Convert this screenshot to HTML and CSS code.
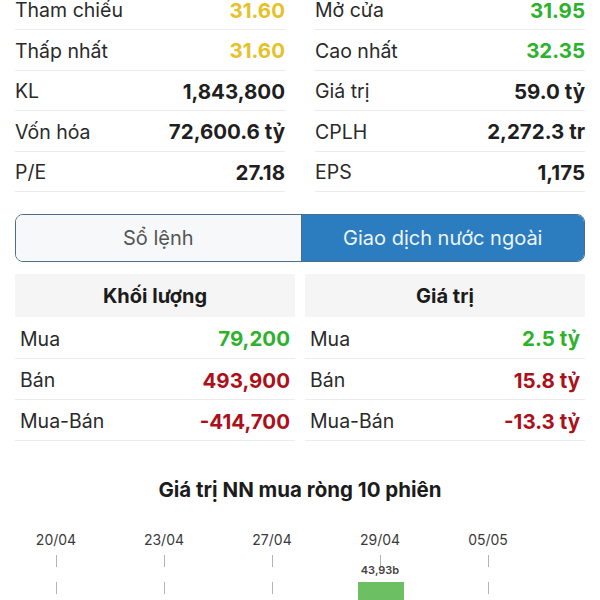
FILE: index.html
```html
<!DOCTYPE html>
<html lang="vi">
<head>
<meta charset="utf-8">
<title>Giao dịch</title>
<link rel="stylesheet" href="styles.css">
</head>
<body>
<div class="stats">
  <div class="cell"><span class="label">Tham chiếu</span><span class="val yellow">31.60</span></div>
  <div class="cell"><span class="label">Mở cửa</span><span class="val green">31.95</span></div>
  <div class="cell"><span class="label">Thấp nhất</span><span class="val yellow">31.60</span></div>
  <div class="cell"><span class="label">Cao nhất</span><span class="val green">32.35</span></div>
  <div class="cell"><span class="label">KL</span><span class="val">1,843,800</span></div>
  <div class="cell"><span class="label">Giá trị</span><span class="val">59.0 tỷ</span></div>
  <div class="cell"><span class="label">Vốn hóa</span><span class="val">72,600.6 tỷ</span></div>
  <div class="cell"><span class="label">CPLH</span><span class="val">2,272.3 tr</span></div>
  <div class="cell"><span class="label">P/E</span><span class="val">27.18</span></div>
  <div class="cell"><span class="label">EPS</span><span class="val">1,175</span></div>
</div>

<div class="tabs">
  <div class="tab">Sổ lệnh</div>
  <div class="tab active">Giao dịch nước ngoài</div>
</div>

<div class="foreign">
  <div class="fcol">
    <div class="fhead">Khối lượng</div>
    <div class="frow"><span>Mua</span><span class="val green">79,200</span></div>
    <div class="frow"><span>Bán</span><span class="val red">493,900</span></div>
    <div class="frow"><span>Mua-Bán</span><span class="val red">-414,700</span></div>
  </div>
  <div class="fcol">
    <div class="fhead">Giá trị</div>
    <div class="frow"><span>Mua</span><span class="val green">2.5 tỷ</span></div>
    <div class="frow"><span>Bán</span><span class="val red">15.8 tỷ</span></div>
    <div class="frow"><span>Mua-Bán</span><span class="val red">-13.3 tỷ</span></div>
  </div>
</div>

<h2 class="chart-title">Giá trị NN mua ròng 10 phiên</h2>

<div class="chart">
  <div class="col"><span class="date">20/04</span><span class="gridline"></span></div>
  <div class="col"><span class="date">23/04</span><span class="gridline"></span></div>
  <div class="col"><span class="date">27/04</span><span class="gridline"></span></div>
  <div class="col has-bar"><span class="date">29/04</span><span class="gridline"></span>
    <span class="bar-label">43,93b</span>
    <span class="bar"></span>
  </div>
  <div class="col"><span class="date">05/05</span><span class="gridline"></span></div>
</div>
</body>
</html>
```

FILE: styles.css
```css
html, body {
  margin: 0;
  padding: 0;
  background: #ffffff;
  overflow: hidden;
}
body {
  font-family: Inter, "Noto Sans", sans-serif;
  color: #222;
  width: 600px;
  height: 600px;
}

.stats {
  display: grid;
  grid-template-columns: 270px 270px;
  column-gap: 30px;
  padding: 0 15px;
  margin-top: -10.5px;
}
.cell {
  height: 40.5px;
  box-sizing: border-box;
  border-bottom: 1px solid #ececec;
  display: flex;
  align-items: center;
  justify-content: space-between;
  font-size: 19.5px;
  padding-top: 2px;
}
.label { color: #2a2a2a; }
.val {
  font-weight: 700;
  color: #1f1f1f;
  font-size: 20.5px;
}
.yellow { color: #e5c12a; }
.green { color: #2eb22e; }
.red { color: #ad0f1b; }

.tabs {
  display: flex;
  margin: 22px 15px 0;
  height: 48px;
  box-sizing: border-box;
  border: 1.5px solid #4d6d89;
  border-radius: 8px;
  overflow: hidden;
}
.tab {
  display: flex;
  align-items: center;
  justify-content: center;
  font-size: 20px;
  color: #555;
  background: #f6f8f9;
}
.tab:first-child {
  width: 284.5px;
  border-right: 1.5px solid #4d6d89;
}
.tab.active {
  flex: 1;
  background: #2c7dbf;
  color: #eef5fb;
}

.foreign {
  display: grid;
  grid-template-columns: 280px 280px;
  column-gap: 10px;
  padding: 0 15px;
  margin-top: 12px;
}
.fhead {
  height: 43px;
  background: #f5f5f5;
  display: flex;
  align-items: center;
  justify-content: center;
  font-weight: 700;
  font-size: 20px;
  color: #1c1c1c;
}
.frow {
  height: 41px;
  box-sizing: border-box;
  border-bottom: 1px solid #ececec;
  padding: 2px 5px 0;
  display: flex;
  align-items: center;
  justify-content: space-between;
  font-size: 19.5px;
  color: #2a2a2a;
}
.frow:nth-child(2) { height: 42px; }

.chart-title {
  margin: 36px 0 0;
  text-align: center;
  font-size: 20.5px;
  line-height: 26px;
  font-weight: 700;
  color: #1c1c1c;
}

.chart {
  display: flex;
  margin: 27px 0 0 2px;
}
.col {
  width: 108px;
  display: flex;
  flex-direction: column;
  align-items: center;
}
.date {
  font-size: 14px;
  line-height: 20px;
  color: #3a3a3a;
}
.gridline {
  margin-top: 5px;
  width: 1px;
  height: 60px;
  background: repeating-linear-gradient(to bottom, #b3b3b3 0 12px, transparent 12px 27px);
}
.has-bar { position: relative; }
.bar-label {
  position: absolute;
  top: 33px;
  left: 0;
  width: 108px;
  text-align: center;
  font-size: 11px;
  line-height: 14px;
  font-weight: 600;
  color: #444;
}
.bar {
  position: absolute;
  top: 52px;
  left: 32px;
  width: 46px;
  height: 40px;
  background: #6dbf63;
}
```
